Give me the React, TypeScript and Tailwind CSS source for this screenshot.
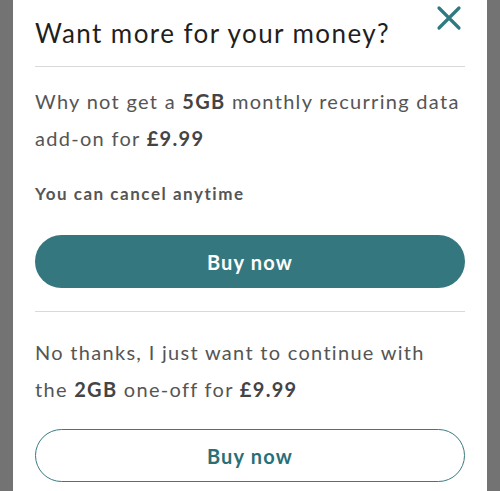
export default function App() {
  return (
    <div className="flex h-[491px] justify-center overflow-hidden bg-[#737373] px-[13px] font-['Lato',sans-serif]">
      <div className="relative flex w-full flex-col bg-white px-[22px]">
        {/* Close */}
        <button className="absolute right-[25px] top-[5px] text-[#2f7a80]" aria-label="Close">
          <svg width="26" height="26" viewBox="0 0 26 26" fill="none" stroke="currentColor" strokeWidth="3.2" strokeLinecap="round">
            <path d="M3 3L23 23M23 3L3 23" />
          </svg>
        </button>

        <h1 className="pt-[16px] text-[26px] leading-[34px] tracking-[0.055em] text-[#1f1f1f]">
          Want more for your money?
        </h1>
        <hr className="mt-[16px] border-t border-[#d9d9d9]" />

        <p className="mt-[16px] text-[20px] leading-[37px] tracking-[0.065em] text-[#555]">
          Why not get a <b className="text-[#444]">5GB</b> monthly recurring data add-on for{" "}
          <b className="text-[#444]">£9.99</b>
        </p>
        <p className="mt-[25px] text-[17px] font-bold leading-[24px] tracking-[0.09em] text-[#555]">
          You can cancel anytime
        </p>

        <button className="mt-[29px] h-[53px] shrink-0 rounded-full bg-[#35777f] text-[20px] font-bold tracking-[0.06em] text-white">
          Buy now
        </button>
        <hr className="mt-[23px] border-t border-[#d9d9d9]" />

        <p className="mt-[22px] text-[20px] leading-[37px] tracking-[0.065em] text-[#555]">
          No thanks, I just want to continue with
          <br />
          the <b className="text-[#444]">2GB</b> one-off for <b className="text-[#444]">£9.99</b>
        </p>

        <button className="mt-[21px] h-[53px] shrink-0 rounded-full border-[1.5px] border-[#3a7a80] bg-white text-[20px] font-bold tracking-[0.06em] text-[#2a6f76]">
          Buy now
        </button>
      </div>
    </div>
  );
}
